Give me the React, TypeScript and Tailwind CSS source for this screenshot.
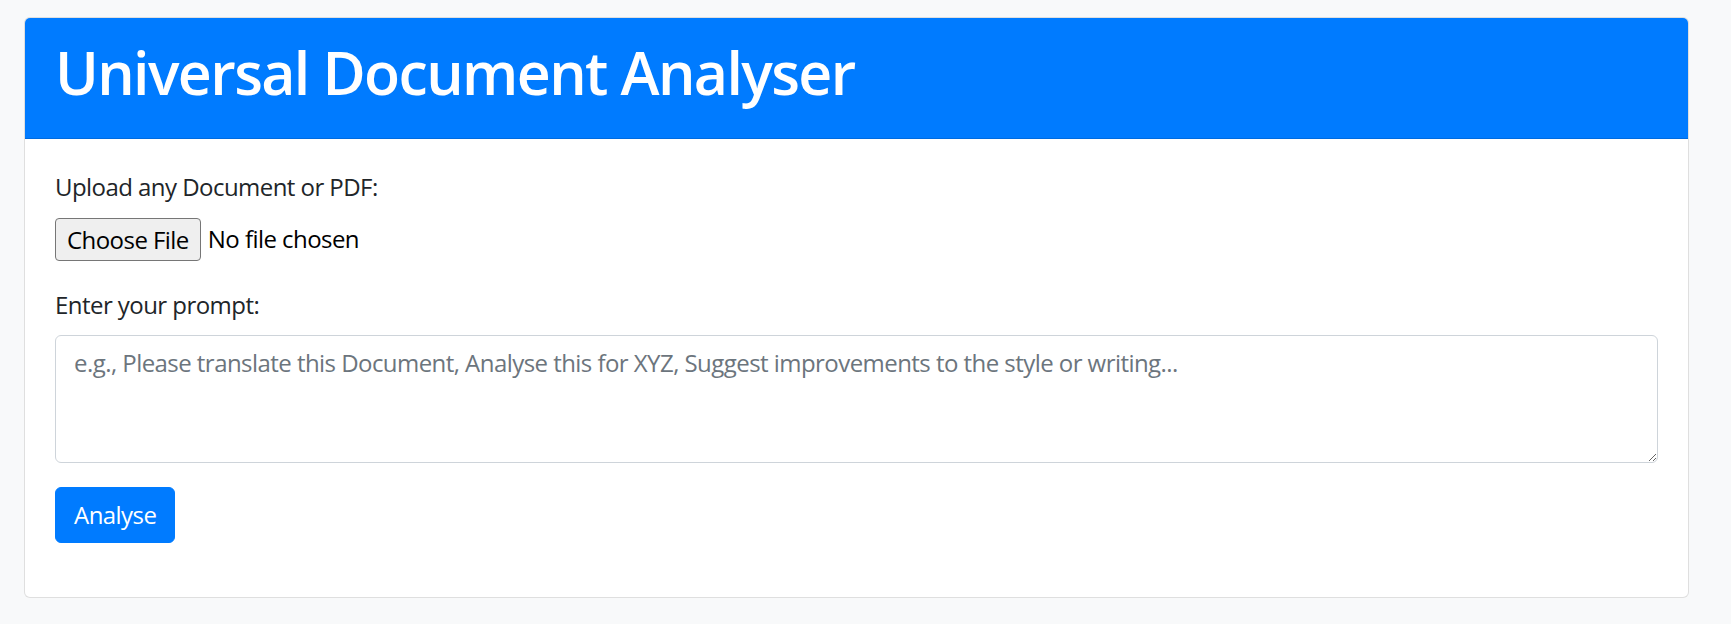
export default function App() {
  return (
    <div
      className="min-h-[624px] w-full bg-[#f8f9fa] pt-[17px] text-[#212529] tracking-[-0.55px]"
      style={{ fontFamily: '"Open Sans", "Noto Sans", sans-serif' }}
    >
      <div className="ml-[24px] mr-[42px] rounded-[6px] border border-black/[.125] bg-white">
        {/* Header */}
        <div className="rounded-t-[5px] border-b border-black/[.125] bg-[#007bff] px-[30px] py-[18px]">
          <h1 className="mb-[12px] text-[59px] font-semibold leading-[72px] tracking-[-1.6px] text-white">
            Universal Document Analyser
          </h1>
        </div>

        {/* Body */}
        <div className="p-[30px]">
          <div className="mb-[24px]">
            <label className="mb-[12px] block text-[24px] leading-[36px]">
              Upload any Document or PDF:
            </label>
            <div className="flex h-[46px] items-start text-[24px]">
              <button className="mt-[1px] h-[43px] rounded-[4px] border border-[#767676] bg-[#efefef] px-[11px] text-[24px] leading-[36px] text-black">
                Choose File
              </button>
              <span className="ml-[7px] mt-[4px] leading-[36px] text-black">No file chosen</span>
            </div>
          </div>

          <div className="mb-[24px]">
            <label className="mb-[12px] block text-[24px] leading-[36px]">
              Enter your prompt:
            </label>
            <textarea
              rows={3}
              placeholder="e.g., Please translate this Document, Analyse this for XYZ, Suggest improvements to the style or writing..."
              className="block h-[128px] w-full rounded-[6px] border border-[#ced4da] bg-white px-[18px] py-[9px] text-[24px] leading-[36px] tracking-[-0.55px] text-[#495057] outline-none placeholder:text-[#6c757d]"
            />
          </div>

          <button className="mb-[24px] h-[56px] rounded-[6px] border border-[#007bff] bg-[#007bff] px-[18px] text-[24px] leading-[36px] text-white">
            Analyse
          </button>
        </div>
      </div>
    </div>
  );
}
